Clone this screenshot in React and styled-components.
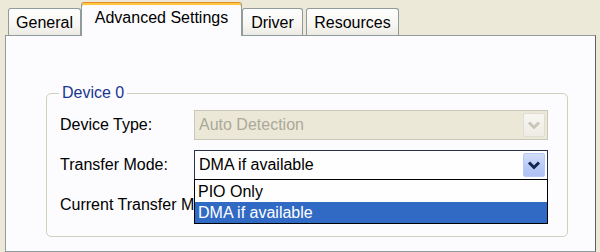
import React from "react";
import styled, { createGlobalStyle } from "styled-components";

const Global = createGlobalStyle`
  html, body { margin: 0; padding: 0; background: #ece9d8; }
  body { font-family: "Liberation Sans", Arial, sans-serif; }
`;

const Window = styled.div`
  width: 600px;
  height: 252px;
  overflow: hidden;
  background: #ece9d8;
  display: flex;
  flex-direction: column;
  font-family: "Liberation Sans", Arial, sans-serif;
  font-size: 16px;
  color: #000;
`;

const TabStrip = styled.div`
  display: flex;
  align-items: flex-end;
  height: 35px;
  padding-left: 8px;
  position: relative;
  z-index: 2;
`;

const Tab = styled.div`
  box-sizing: border-box;
  width: ${(p) => p.$w}px;
  height: 27px;
  margin-right: ${(p) => (p.$gap ? 3 : 0)}px;
  border: 1px solid #919b9c;
  border-bottom: none;
  border-radius: 3px 3px 0 0;
  background: linear-gradient(#fefefe, #f7f6f2 60%, #ebeae4);
  display: flex;
  align-items: center;
  justify-content: center;
  padding-top: 1px;
  line-height: 18px;
  white-space: nowrap;
`;

const ActiveTab = styled.div`
  box-sizing: border-box;
  width: ${(p) => p.$w}px;
  height: 34px;
  margin-bottom: -1px;
  border: 1px solid #919b9c;
  border-top: 1px solid #e68b2c;
  border-bottom: none;
  border-radius: 3px 3px 0 0;
  box-shadow: inset 0 2px 0 #ffc73c;
  background: #fcfcfe;
  display: flex;
  justify-content: center;
  padding-top: 6px;
  line-height: 18px;
  white-space: nowrap;
`;

const Panel = styled.div`
  flex: 1;
  margin-left: 5px;
  width: 591px;
  box-sizing: border-box;
  background: #fcfcfe;
  border: 1px solid #919b9c;
  border-right-color: #5f5f5f;
  padding: 48px 0 0 40px;
`;

const Group = styled.fieldset`
  margin: 0;
  box-sizing: border-box;
  width: 522px;
  height: 153px;
  border: 1px solid #d0d0bf;
  border-radius: 5px;
  padding: 8px 0 0 13px;
  min-width: 0;
`;

const Legend = styled.legend`
  padding: 0 3px;
  margin-left: -1px;
  color: #1a3590;
  line-height: 18px;
`;

const Row = styled.div`
  display: flex;
  align-items: center;
  height: 30px;
  margin-bottom: 10px;
`;

const Label = styled.div`
  width: 134px;
  flex: none;
  white-space: nowrap;
  overflow: hidden;
  line-height: 18px;
`;

const Combo = styled.div`
  position: relative;
  box-sizing: border-box;
  width: 354px;
  height: 30px;
  border: 1px solid ${(p) => (p.$disabled ? "#c9c7ba" : "#26334f")};
  background: ${(p) => (p.$disabled ? "#ebe8d7" : "#fefefe")};
  color: ${(p) => (p.$disabled ? "#aca899" : "#000")};
  display: flex;
  align-items: center;
  padding: 2px 2px 2px 4px;
`;

const ComboText = styled.div`
  flex: 1;
  line-height: 18px;
  white-space: nowrap;
`;

const ArrowBtn = styled.div`
  box-sizing: border-box;
  width: 22px;
  height: 24px;
  border-radius: 2px;
  border: 1px solid ${(p) => (p.$disabled ? "#e0ddd2" : "#b7c9f4")};
  background: ${(p) =>
    p.$disabled
      ? "linear-gradient(#f7f6f1, #eeece4)"
      : "linear-gradient(#d2ddfa, #b6c8f6 60%, #aec2f3)"};
  display: flex;
  align-items: center;
  justify-content: center;
`;

const DropList = styled.div`
  position: absolute;
  top: 100%;
  left: -1px;
  width: 354px;
  box-sizing: border-box;
  height: 45px;
  border: 1px solid #000;
  background: #fefefe;
  z-index: 5;
  display: flex;
  flex-direction: column;
  padding-top: 1px;
`;

const Item = styled.div`
  height: 21px;
  line-height: 21px;
  padding-left: 3px;
  background: ${(p) => (p.$sel ? "#316ac5" : "transparent")};
  color: ${(p) => (p.$sel ? "#fff" : "#000")};
  white-space: nowrap;
`;

const Chevron = ({ color }) => (
  <svg width="14" height="10" viewBox="0 0 14 10">
    <path d="M2 2.5 L7 7.5 L12 2.5" fill="none" stroke={color} strokeWidth="3" strokeLinejoin="miter" />
  </svg>
);

export default function App() {
  return (
    <>
      <Global />
      <Window>
        <TabStrip>
          <Tab $w={73}>General</Tab>
          <ActiveTab $w={161}>Advanced Settings</ActiveTab>
          <Tab $w={61} $gap>Driver</Tab>
          <Tab $w={93}>Resources</Tab>
        </TabStrip>
        <Panel>
          <Group>
            <Legend>Device 0</Legend>
            <Row>
              <Label>Device Type:</Label>
              <Combo $disabled>
                <ComboText>Auto Detection</ComboText>
                <ArrowBtn $disabled>
                  <Chevron color="#c9c7ba" />
                </ArrowBtn>
              </Combo>
            </Row>
            <Row>
              <Label>Transfer Mode:</Label>
              <Combo>
                <ComboText>DMA if available</ComboText>
                <ArrowBtn>
                  <Chevron color="#15234d" />
                </ArrowBtn>
                <DropList>
                  <Item>PIO Only</Item>
                  <Item $sel>DMA if available</Item>
                </DropList>
              </Combo>
            </Row>
            <Row>
              <Label>Current Transfer Mode:</Label>
            </Row>
          </Group>
        </Panel>
      </Window>
    </>
  );
}
